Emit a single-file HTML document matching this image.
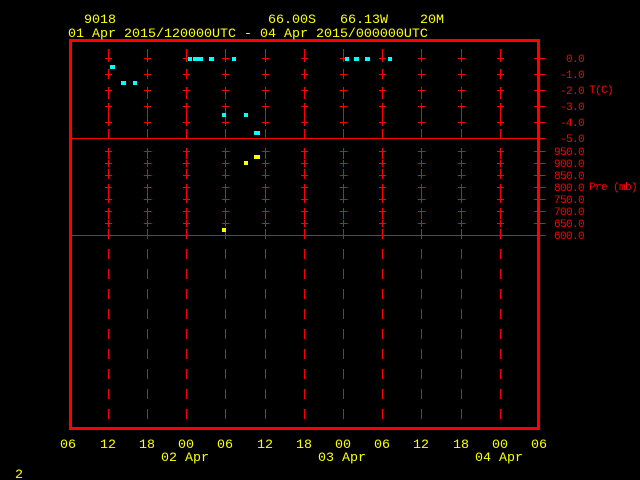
<!DOCTYPE html>
<html>
<head>
<meta charset="utf-8">
<style>
html,body{margin:0;padding:0;background:#000;width:640px;height:480px;overflow:hidden}
svg{display:block;position:absolute;left:0;top:0}
.y{font:13.33px "Liberation Mono",monospace;fill:#ff0}
.r{font:11px "Liberation Mono",monospace;fill:#f00;letter-spacing:-.6px}
</style>
</head>
<body>
<svg width="640" height="480" viewBox="0 0 640 480" xml:space="preserve">
<defs>
<path id="c" fill="none" stroke="#f00" stroke-width="1" shape-rendering="crispEdges" d="M.5 49V59M.5 69V79M.5 89V99M.5 109V119M.5 129V139M.5 149V159M.5 169V179M.5 189V199M.5 209V219M.5 229V239M.5 249V259M.5 269V279M.5 289V299M.5 309V319M.5 329V339M.5 349V359M.5 369V379M.5 389V399M.5 409V419M.5 55V62M.5 71V78M.5 87V94M.5 103V110M.5 119V126M.5 148V155M.5 160V167M.5 172V179M.5 184V191M.5 196V203M.5 208V215M.5 220V227M.5 232V239M-3 58.5H4M-3 74.5H4M-3 90.5H4M-3 106.5H4M-3 122.5H4M-3 151.5H4M-3 163.5H4M-3 175.5H4M-3 187.5H4M-3 199.5H4M-3 211.5H4M-3 223.5H4"/>
</defs>
<rect width="640" height="480" fill="#000"/>
<use href="#c" x="108"/><use href="#c" x="147"/><use href="#c" x="186"/><use href="#c" x="225"/><use href="#c" x="265"/><use href="#c" x="304"/><use href="#c" x="343"/><use href="#c" x="382"/><use href="#c" x="421"/><use href="#c" x="461"/><use href="#c" x="500"/>
<path fill="none" stroke="#f00" stroke-width="1" shape-rendering="crispEdges" d="M72 138.5H545M72 235.5H545M534 58.5H545M534 74.5H545M534 90.5H545M534 106.5H545M534 122.5H545M534 151.5H545M534 163.5H545M534 175.5H545M534 187.5H545M534 199.5H545M534 211.5H545M534 223.5H545"/>
<rect x="70.5" y="40.5" width="468" height="388" fill="none" stroke="#f00" stroke-width="3" shape-rendering="crispEdges"/>
<g fill="#0ff" shape-rendering="crispEdges">
<rect x="110" y="65" width="5" height="4"/>
<rect x="121" y="81" width="5" height="4"/>
<rect x="133" y="81" width="4" height="4"/>
<rect x="188" y="57" width="4" height="4"/>
<rect x="193" y="57" width="10" height="4"/>
<rect x="209" y="57" width="5" height="4"/>
<rect x="232" y="57" width="4" height="4"/>
<rect x="222" y="113" width="4" height="4"/>
<rect x="244" y="113" width="4" height="4"/>
<rect x="254" y="131" width="6" height="4"/>
<rect x="345" y="57" width="4" height="4"/>
<rect x="354" y="57" width="5" height="4"/>
<rect x="365" y="57" width="5" height="4"/>
<rect x="388" y="57" width="4" height="4"/>
</g>
<g fill="#ff0" shape-rendering="crispEdges">
<rect x="254" y="155" width="6" height="4"/>
<rect x="244" y="161" width="4" height="4"/>
<rect x="222" y="228" width="4" height="4"/>
</g>
<g class="y">
<text x="84" y="23">9018</text>
<text x="268" y="23">66.00S</text>
<text x="340" y="23">66.13W</text>
<text x="420" y="23">20M</text>
<text x="68" y="37">01 Apr 2015/120000UTC - 04 Apr 2015/000000UTC</text>
<text x="60" y="448">06</text>
<text x="100" y="448">12</text>
<text x="139" y="448">18</text>
<text x="178" y="448">00</text>
<text x="217" y="448">06</text>
<text x="257" y="448">12</text>
<text x="296" y="448">18</text>
<text x="335" y="448">00</text>
<text x="374" y="448">06</text>
<text x="413" y="448">12</text>
<text x="453" y="448">18</text>
<text x="492" y="448">00</text>
<text x="531" y="448">06</text>
<text x="161" y="461">02 Apr</text>
<text x="318" y="461">03 Apr</text>
<text x="475" y="461">04 Apr</text>
<text x="15" y="478">2</text>
</g>
<g class="r" text-anchor="end">
<text x="584" y="62">0.0</text>
<text x="584" y="78">-1.0</text>
<text x="584" y="94">-2.0</text>
<text x="584" y="110">-3.0</text>
<text x="584" y="126">-4.0</text>
<text x="584" y="142">-5.0</text>
<text x="584" y="155">950.0</text>
<text x="584" y="167">900.0</text>
<text x="584" y="179">850.0</text>
<text x="584" y="191">800.0</text>
<text x="584" y="203">750.0</text>
<text x="584" y="215">700.0</text>
<text x="584" y="227">650.0</text>
<text x="584" y="239">600.0</text>
</g>
<g class="r">
<text x="589" y="93">T(C)</text>
<text x="589" y="190">Pre (mb)</text>
</g>
</svg>
</body>
</html>
